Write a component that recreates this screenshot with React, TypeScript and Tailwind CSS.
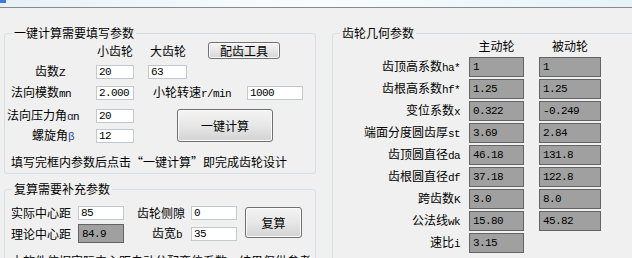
import React from 'react';

// Latin parts of the labels and the box values use a narrow fixed-width face
const mono = "font-['Liberation_Mono',monospace] text-[11px] tracking-[-0.6px]";

const Mono: React.FC<{ children: React.ReactNode; className?: string }> = ({ children, className = '' }) => (
  <span className={`${mono} ${className}`}>{children}</span>
);

const TextBox: React.FC<{ value: string; className?: string }> = ({ value, className = '' }) => (
  <input
    readOnly
    value={value}
    className={`h-[14px] border border-[#c3c7cf] bg-white px-[2px] text-black outline-none ${mono} ${className}`}
  />
);

const GrayBox: React.FC<{ value: string; className?: string }> = ({ value, className = '' }) => (
  <div className={`flex items-center border border-[#646464] bg-[#a0a0a0] pl-[3px] text-black ${mono} ${className}`}>
    {value}
  </div>
);

const WinButton: React.FC<{ children: React.ReactNode; className?: string }> = ({ children, className = '' }) => (
  <button
    className={`flex shrink-0 items-center justify-center rounded-[3px] border border-[#707070] bg-linear-to-b from-[#f4f4f4] via-[#e7e7e7] to-[#d3d3d3] leading-none text-black shadow-[inset_0_0_0_1px_#fbfbfb] ${className}`}
  >
    {children}
  </button>
);

// geometry rows: label, driving gear, driven gear
const GEOMETRY: { label: string; latin: string; a: string; b?: string }[] = [
  { label: '齿顶高系数', latin: 'ha*', a: '1', b: '1' },
  { label: '齿根高系数', latin: 'hf*', a: '1.25', b: '1.25' },
  { label: '变位系数', latin: 'x', a: '0.322', b: '-0.249' },
  { label: '端面分度圆齿厚', latin: 'st', a: '3.69', b: '2.84' },
  { label: '齿顶圆直径', latin: 'da', a: '46.18', b: '131.8' },
  { label: '齿根圆直径', latin: 'df', a: '37.18', b: '122.8' },
  { label: '跨齿数', latin: 'K', a: '3.0', b: '8.0' },
  { label: '公法线', latin: 'wk', a: '15.80', b: '45.82' },
  { label: '速比', latin: 'i', a: '3.15' },
];

export default function App() {
  return (
    <div className="h-[258px] w-[632px] overflow-hidden bg-[#f0f0f0] font-['Noto_Sans_CJK_SC',sans-serif] text-[12px] leading-[14px] text-black">
      {/* window title bar remnant */}
      <div className="relative h-[7px] bg-linear-to-r from-[#e8f1f8] via-[#f7fcff] to-[#e5f3f9]">
        <div className="absolute left-0 top-0 h-[3px] w-[6px] bg-[#3b7dd8]" />
      </div>
      <div className="h-px bg-[#8a8a8a]" />

      <div className="flex items-start pt-[18px]">
        <div className="ml-[4px] flex w-[312px] shrink-0 flex-col">
          {/* one-click calculation inputs */}
          <fieldset className="h-[148px] rounded-[3px] border border-[#d5dfe5]">
            <legend className="ml-[7px] px-[2px]">一键计算需要填写参数</legend>
            <div className="pt-[2px]">
              <div className="flex h-[17px] items-center">
                <span className="ml-[92px] w-[36px]">小齿轮</span>
                <span className="ml-[17px] w-[36px]">大齿轮</span>
                <WinButton className="ml-[22px] h-[17px] w-[72px]">配齿工具</WinButton>
              </div>

              <div className="mt-[6px] flex h-[14px] items-center">
                <span className="w-[91px] shrink-0 whitespace-nowrap pl-[30px]">
                  齿数<Mono>Z</Mono>
                </span>
                <TextBox value="20" className="w-[38px]" />
                <TextBox value="63" className="ml-[14px] w-[39px]" />
              </div>

              <div className="mt-[7px] flex h-[14px] items-center">
                <span className="w-[91px] shrink-0 whitespace-nowrap pl-[6px]">
                  法向模数<Mono>mn</Mono>
                </span>
                <TextBox value="2.000" className="w-[38px]" />
                <span className="ml-[19px] w-[94px] shrink-0 whitespace-nowrap">
                  小轮转速<Mono>r/min</Mono>
                </span>
                <TextBox value="1000" className="w-[56px]" />
              </div>

              <div className="mt-[9px] flex items-start">
                <div className="w-[129px] shrink-0">
                  <div className="flex h-[14px] items-center">
                    <span className="w-[91px] shrink-0 whitespace-nowrap pl-[2px]">
                      法向压力角<Mono className="text-[#1c1c55]">α</Mono>
                      <Mono>n</Mono>
                    </span>
                    <TextBox value="20" className="w-[38px]" />
                  </div>
                  <div className="mt-[6px] flex h-[14px] items-center">
                    <span className="w-[91px] shrink-0 whitespace-nowrap pl-[27px]">
                      螺旋角<Mono className="text-[#2b4394]">β</Mono>
                    </span>
                    <TextBox value="12" className="w-[38px]" />
                  </div>
                </div>
                <WinButton className="ml-[43px] h-[33px] w-[96px]">一键计算</WinButton>
              </div>

              <p className="mt-[12px] whitespace-nowrap pl-[6px]">填写完框内参数后点击“一键计算”即完成齿轮设计</p>
            </div>
          </fieldset>

          {/* re-check inputs */}
          <fieldset className="mt-[8px] h-[100px] rounded-[3px] border border-[#d5dfe5]">
            <legend className="ml-[7px] px-[2px]">复算需要补充参数</legend>
            <div className="flex items-start pt-[10px]">
              <div>
                <div className="flex h-[14px] items-center">
                  <span className="w-[73px] shrink-0 whitespace-nowrap pl-[6px]">实际中心距</span>
                  <TextBox value="85" className="w-[46px]" />
                  <span className="w-[67px] shrink-0 whitespace-nowrap pl-[13px]">齿轮侧隙</span>
                  <TextBox value="0" className="w-[46px]" />
                </div>
                <div className="mt-[4px] flex h-[19px] items-center">
                  <span className="w-[73px] shrink-0 whitespace-nowrap pl-[6px]">理论中心距</span>
                  <GrayBox value="84.9" className="h-[19px] w-[46px]" />
                  <span className="w-[67px] shrink-0 whitespace-nowrap pl-[28px]">
                    齿宽<Mono>b</Mono>
                  </span>
                  <TextBox value="35" className="w-[46px]" />
                </div>
              </div>
              <WinButton className="ml-[8px] mt-[1px] h-[31px] w-[57px]">复算</WinButton>
            </div>
            <p className="mt-[11px] whitespace-nowrap pl-[6px]">本软件依据实际中心距自动分配变位系数，结果仅供参考</p>
          </fieldset>
        </div>

        {/* gear geometry results */}
        <fieldset className="ml-[16px] h-[250px] w-[310px] shrink-0 rounded-[3px] border border-[#d5dfe5]">
          <legend className="ml-[7px] px-[2px]">齿轮几何参数</legend>
          <div className="flex h-[12px] items-center leading-[12px]">
            <span className="ml-[136px] w-[55px] text-center">主动轮</span>
            <span className="ml-[15px] w-[62px] text-center">被动轮</span>
          </div>
          <div className="mt-[5px] flex flex-col gap-[2px]">
            {GEOMETRY.map((row) => (
              <div key={row.label} className="flex h-[20px] items-center">
                <span className="w-[127px] shrink-0 whitespace-nowrap text-right">
                  {row.label}
                  <Mono>{row.latin}</Mono>
                </span>
                <GrayBox value={row.a} className="ml-[9px] h-[20px] w-[55px]" />
                {row.b !== undefined && <GrayBox value={row.b} className="ml-[15px] h-[20px] w-[62px]" />}
              </div>
            ))}
          </div>
        </fieldset>
      </div>
    </div>
  );
}
